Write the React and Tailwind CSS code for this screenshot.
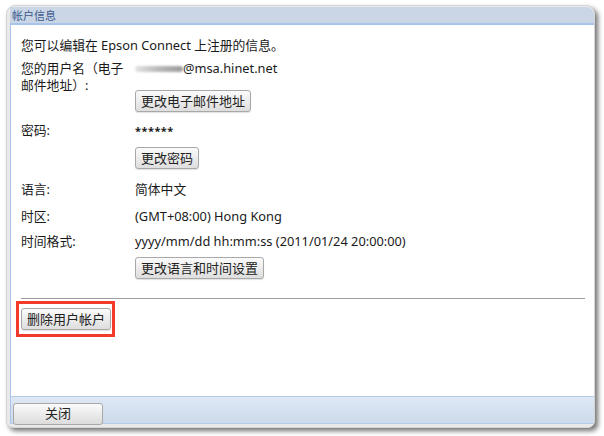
import React from 'react';

const font = { fontFamily: '"Noto Sans", "Noto Sans CJK SC", sans-serif' };

const Btn = ({ children, className = '' }) => (
  <button
    className={`h-[22px] px-[5px] rounded-[3px] border border-[#a8a8a8] bg-gradient-to-b from-[#fbfbfb] to-[#dedede] text-[13px] leading-none text-[#222] shadow-[0_1px_1px_rgba(0,0,0,0.12)] ${className}`}
  >
    {children}
  </button>
);

const Row = ({ label, children, className = '' }) => (
  <div className={`flex ${className}`}>
    <div className="w-[114px] shrink-0 leading-[17px]">{label}</div>
    <div className="flex-1 leading-[17px]">{children}</div>
  </div>
);

const App = () => {
  return (
    <div className="w-[604px] h-[436px] bg-white overflow-hidden" style={font}>
      <div className="ml-[6px] mt-[5px] w-[589px] h-[423px] rounded-t-[9px] rounded-b-[7px] bg-[#e9e9e9] border border-[#d6d6d6] shadow-[3px_3px_5px_rgba(0,0,0,0.55)] flex flex-col overflow-hidden pl-[3px] pt-[1px] pb-[3px]">
        <div className="h-[18px] shrink-0 bg-[#cad6e6] border-b-2 border-[#a8c4ea] rounded-tr-[8px] px-[2px] text-[11px] leading-[17px] text-[#3a5a8c]">
          帐户信息
        </div>
        <div className="flex-1 bg-white border-l border-[#a8c4ea] pl-[10px] pr-[9px] pt-[12px] text-[12.8px] text-[#1a1a1a]">
          <div className="leading-[17px]">您可以编辑在 Epson Connect 上注册的信息。</div>

          <Row label={<>您的用户名（电子<br />邮件地址）:</>} className="mt-[6px]">
            <div className="flex items-center">
              <span className="inline-block w-[48px] h-[6px] bg-gradient-to-r from-[#e4e4e4] via-[#b8b8b8] to-[#9c9c9c] rounded-sm blur-[1px]" />
              <span>@msa.hinet.net</span>
            </div>
            <Btn className="mt-[13px]">更改电子邮件地址</Btn>
          </Row>

          <Row label="密码:" className="mt-[10px]">
            <div className="text-[11px] font-bold tracking-[0.5px]">******</div>
            <Btn className="mt-[8px]">更改密码</Btn>
          </Row>

          <Row label="语言:" className="mt-[12px]">简体中文</Row>
          <Row label="时区:" className="mt-[10px]">(GMT+08:00) Hong Kong</Row>
          <Row label="时间格式:" className="mt-[8px]">
            <div>yyyy/mm/dd hh:mm:ss (2011/01/24 20:00:00)</div>
            <Btn className="mt-[7px]">更改语言和时间设置</Btn>
          </Row>

          <div className="mt-[19px] h-px bg-[#9e9e9e]" />

          <div className="mt-[2px] ml-[-5px] w-[99px] h-[36px] border-[3px] border-[#f23b2b] flex items-center pl-[2px]">
            <Btn>删除用户帐户</Btn>
          </div>
        </div>
        <div className="h-[28px] shrink-0 border-t border-[#b3cbe9] bg-gradient-to-b from-[#dfe8f4] to-[#ccdaeb] border-l border-l-[#a8c4ea] border-b border-b-[#b3cbe9] pl-[2px] pt-[3px]">
          <button className="w-[90px] h-[22px] rounded-[3px] border border-[#a8a8a8] bg-gradient-to-b from-[#fbfbfb] to-[#dcdcdc] text-[13px] leading-none text-[#222]">
            关闭
          </button>
        </div>
      </div>
    </div>
  );
};

export default App;
